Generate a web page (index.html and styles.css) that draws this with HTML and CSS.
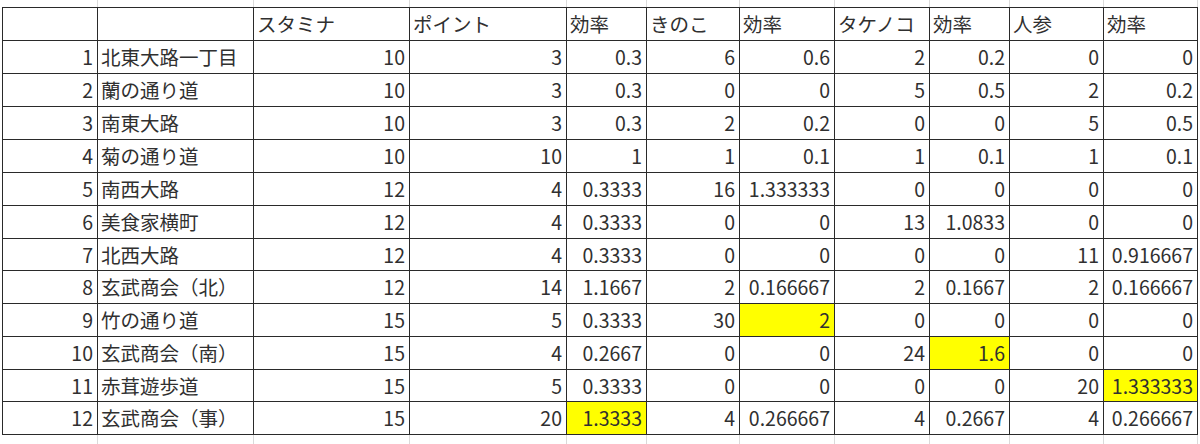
FILE: index.html
```html
<!DOCTYPE html>
<html lang="ja">
<head>
<meta charset="utf-8">
<link rel="stylesheet" href="styles.css">
</head>
<body>
<div class="sheet">
  <div class="row ghost top"><div></div><div></div><div></div><div></div><div></div><div></div><div></div><div></div><div></div><div></div><div></div></div>
  <div class="row head">
    <div class="c"></div><div class="c"></div><div class="c t">スタミナ</div><div class="c t">ポイント</div><div class="c t">効率</div><div class="c t">きのこ</div><div class="c t">効率</div><div class="c t">タケノコ</div><div class="c t">効率</div><div class="c t">人参</div><div class="c t">効率</div>
  </div>
  <div class="row"><div class="c n">1</div><div class="c t">北東大路一丁目</div><div class="c n">10</div><div class="c n">3</div><div class="c n">0.3</div><div class="c n">6</div><div class="c n">0.6</div><div class="c n">2</div><div class="c n">0.2</div><div class="c n">0</div><div class="c n">0</div></div>
  <div class="row"><div class="c n">2</div><div class="c t">蘭の通り道</div><div class="c n">10</div><div class="c n">3</div><div class="c n">0.3</div><div class="c n">0</div><div class="c n">0</div><div class="c n">5</div><div class="c n">0.5</div><div class="c n">2</div><div class="c n">0.2</div></div>
  <div class="row"><div class="c n">3</div><div class="c t">南東大路</div><div class="c n">10</div><div class="c n">3</div><div class="c n">0.3</div><div class="c n">2</div><div class="c n">0.2</div><div class="c n">0</div><div class="c n">0</div><div class="c n">5</div><div class="c n">0.5</div></div>
  <div class="row"><div class="c n">4</div><div class="c t">菊の通り道</div><div class="c n">10</div><div class="c n">10</div><div class="c n">1</div><div class="c n">1</div><div class="c n">0.1</div><div class="c n">1</div><div class="c n">0.1</div><div class="c n">1</div><div class="c n">0.1</div></div>
  <div class="row"><div class="c n">5</div><div class="c t">南西大路</div><div class="c n">12</div><div class="c n">4</div><div class="c n">0.3333</div><div class="c n">16</div><div class="c n">1.333333</div><div class="c n">0</div><div class="c n">0</div><div class="c n">0</div><div class="c n">0</div></div>
  <div class="row"><div class="c n">6</div><div class="c t">美食家横町</div><div class="c n">12</div><div class="c n">4</div><div class="c n">0.3333</div><div class="c n">0</div><div class="c n">0</div><div class="c n">13</div><div class="c n">1.0833</div><div class="c n">0</div><div class="c n">0</div></div>
  <div class="row short"><div class="c n">7</div><div class="c t">北西大路</div><div class="c n">12</div><div class="c n">4</div><div class="c n">0.3333</div><div class="c n">0</div><div class="c n">0</div><div class="c n">0</div><div class="c n">0</div><div class="c n">11</div><div class="c n">0.916667</div></div>
  <div class="row"><div class="c n">8</div><div class="c t">玄武商会（北）</div><div class="c n">12</div><div class="c n">14</div><div class="c n">1.1667</div><div class="c n">2</div><div class="c n">0.166667</div><div class="c n">2</div><div class="c n">0.1667</div><div class="c n">2</div><div class="c n">0.166667</div></div>
  <div class="row"><div class="c n">9</div><div class="c t">竹の通り道</div><div class="c n">15</div><div class="c n">5</div><div class="c n">0.3333</div><div class="c n">30</div><div class="c n hl">2</div><div class="c n">0</div><div class="c n">0</div><div class="c n">0</div><div class="c n">0</div></div>
  <div class="row"><div class="c n">10</div><div class="c t">玄武商会（南）</div><div class="c n">15</div><div class="c n">4</div><div class="c n">0.2667</div><div class="c n">0</div><div class="c n">0</div><div class="c n">24</div><div class="c n hl">1.6</div><div class="c n">0</div><div class="c n">0</div></div>
  <div class="row short"><div class="c n">11</div><div class="c t">赤茸遊歩道</div><div class="c n">15</div><div class="c n">5</div><div class="c n">0.3333</div><div class="c n">0</div><div class="c n">0</div><div class="c n">0</div><div class="c n">0</div><div class="c n">20</div><div class="c n hl">1.333333</div></div>
  <div class="row"><div class="c n">12</div><div class="c t">玄武商会（事）</div><div class="c n">15</div><div class="c n">20</div><div class="c n hl">1.3333</div><div class="c n">4</div><div class="c n">0.266667</div><div class="c n">4</div><div class="c n">0.2667</div><div class="c n">4</div><div class="c n">0.266667</div></div>
  <div class="row ghost bottom"><div></div><div></div><div></div><div></div><div></div><div></div><div></div><div></div><div></div><div></div><div></div></div>
</div>
</body>
</html>
```

FILE: styles.css
```css
html, body {
  margin: 0;
  padding: 0;
  background: #ffffff;
}

body {
  width: 1200px;
  height: 444px;
  overflow: hidden;
  font-family: "Noto Sans CJK JP", "Noto Sans", sans-serif;
  font-size: 19.5px;
  color: #303030;
}

.sheet {
  margin-left: 2px;
  display: flex;
  flex-direction: column;
}

.row {
  display: grid;
  grid-template-columns: 96px 156px 156px 157px 80px 93px 95px 95px 80px 94px 94px;
  height: 33px;
}

.row.short {
  height: 32px;
}

.row.head {
  height: 34px;
}

.row.ghost.top {
  height: 7px;
}

.row.ghost.bottom {
  height: 12px;
}

.ghost > div {
  border-right: 1px solid #dadada;
}

.c {
  box-sizing: border-box;
  border-right: 1px solid #2a2a2a;
  border-bottom: 1px solid #2a2a2a;
  display: flex;
  align-items: center;
  padding: 0 4px 0 4px;
  white-space: nowrap;
  overflow: hidden;
  line-height: 1;
}

.row > .c:first-child {
  border-left: 1px solid #2a2a2a;
}

.head > .c {
  border-top: 1px solid #2a2a2a;
}

.c.n {
  justify-content: flex-end;
}

.c.t {
  justify-content: flex-start;
  padding-left: 3px;
}

.c.hl {
  background: #ffff00;
}
```
